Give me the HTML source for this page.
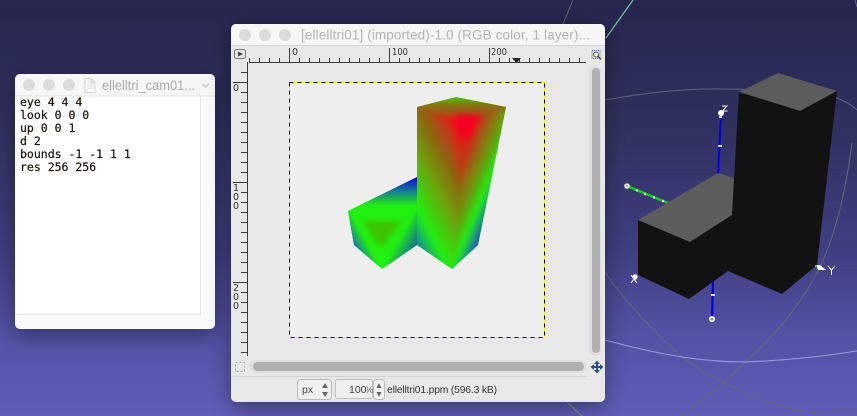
<!DOCTYPE html>
<html><head><meta charset="utf-8">
<style>
html,body{margin:0;padding:0;width:857px;height:416px;overflow:hidden;background:#2a2a55}
svg{position:absolute;left:0;top:0;display:block}
.t{font-family:"Liberation Sans",sans-serif}
.m{font-family:"DejaVu Sans Mono","Liberation Mono",monospace;font-size:11.5px;fill:#1a1208;stroke:#1a1208;stroke-width:.2}
.r{font-family:"DejaVu Sans","Liberation Sans",sans-serif;font-size:9.5px;fill:#333}
</style></head><body>
<svg width="857" height="416" viewBox="0 0 857 416" xmlns="http://www.w3.org/2000/svg">
<defs>
<linearGradient id="bg" x1="0" y1="0" x2="0" y2="1">
<stop offset="0" stop-color="#25254d"/><stop offset=".3" stop-color="#30305f"/><stop offset=".6" stop-color="#3f3e80"/><stop offset=".8" stop-color="#5251a4"/><stop offset="1" stop-color="#605db8"/>
</linearGradient>
<filter id="sh" x="-20%" y="-20%" width="140%" height="140%"><feDropShadow dx="0" dy="6" stdDeviation="11" flood-color="#000" flood-opacity=".38"/></filter>
<filter id="b1" x="-20%" y="-20%" width="140%" height="140%"><feGaussianBlur stdDeviation="2.5"/></filter>
<filter id="b2" x="-30%" y="-30%" width="160%" height="160%"><feGaussianBlur stdDeviation="1"/></filter>
<filter id="b3" x="-60%" y="-60%" width="220%" height="220%"><feGaussianBlur stdDeviation="3.5"/></filter>
<filter id="b4" x="-60%" y="-60%" width="220%" height="220%"><feGaussianBlur stdDeviation="2.6"/></filter>
<clipPath id="tall"><polygon points="417,107 456,97 506,107 478,245 452,269 417,245"/></clipPath>
<clipPath id="small"><polygon points="348,211 417,177 417,245 382,269 354,245"/></clipPath>
<linearGradient id="gl" gradientUnits="userSpaceOnUse" x1="417" y1="245" x2="496" y2="203">
<stop offset="0" stop-color="#148c90"/><stop offset=".2" stop-color="#22f010"/><stop offset=".5" stop-color="#6fa010"/><stop offset=".72" stop-color="#8a6810"/><stop offset=".85" stop-color="#b04814"/><stop offset="1" stop-color="#e81818"/>
</linearGradient>
<linearGradient id="gr" gradientUnits="userSpaceOnUse" x1="478" y1="245" x2="427.400" y2="223.500">
<stop offset="0" stop-color="#1a50c0"/><stop offset=".27" stop-color="#22f010"/><stop offset=".42" stop-color="#50b010"/><stop offset=".55" stop-color="#7a8a10"/><stop offset=".8" stop-color="#b04814"/><stop offset="1" stop-color="#e81818"/>
</linearGradient>
<linearGradient id="gt" gradientUnits="userSpaceOnUse" x1="0" y1="95" x2="0" y2="116">
<stop offset="0" stop-color="#30e010"/><stop offset=".4" stop-color="#7f7a10"/><stop offset="1" stop-color="#a84818"/>
</linearGradient>
<linearGradient id="gs" gradientUnits="userSpaceOnUse" x1="0" y1="177" x2="0" y2="206">
<stop offset="0" stop-color="#1000e8"/><stop offset=".5" stop-color="#148090"/><stop offset="1" stop-color="#22f010"/>
</linearGradient>
<linearGradient id="gsl" gradientUnits="userSpaceOnUse" x1="356" y1="252" x2="369" y2="245">
<stop offset="0" stop-color="#1858b0"/><stop offset=".4" stop-color="#18a070"/><stop offset="1" stop-color="#22f010"/>
</linearGradient>
<linearGradient id="gsr" gradientUnits="userSpaceOnUse" x1="411" y1="254" x2="395" y2="245">
<stop offset="0" stop-color="#147090"/><stop offset="1" stop-color="#22f010"/>
</linearGradient>
</defs>

<rect width="857" height="416" fill="url(#bg)"/>

<!-- background arcs -->
<g fill="none" stroke-width="1">
<path d="M605,100 Q660,90 705,89 Q770,88 837,98 Q848,102 857,110" stroke="#62627c"/>
<path d="M605,273 Q640,320 682,357 Q722,388 787,408 Q825,416 857,412" stroke="#66667a"/>
<path d="M857,7 L855,0" stroke="#66667a"/>
<path d="M852,143 Q846,190 835,227 Q815,300 745,362 Q715,392 680,416" stroke="#66667a"/>
<path d="M605,340 Q645,351 682,357 Q715,362 745,362 Q800,360 857,351" stroke="#9c9ce0"/>
<path d="M606,38 L633,0" stroke="#7fbfa8" stroke-width="1.2"/>
<path d="M573,0 L563,24" stroke="#5f5f72"/>
<path d="M567,402 L582,416" stroke="#7d9a9a"/>
</g>

<!-- 3D axes behind -->
<line x1="721" y1="115" x2="718" y2="175" stroke="#0000f0" stroke-width="2"/>
<circle cx="721" cy="113" r="3" fill="#fff"/><rect x="719" y="116" width="3" height="2" fill="#ccd"/>
<rect x="718" y="145" width="4" height="2" fill="#dde"/>
<line x1="713" y1="280" x2="712" y2="318" stroke="#0000f0" stroke-width="2.2"/>
<rect x="711" y="294" width="4" height="2" fill="#dde"/>
<circle cx="712" cy="319" r="3" fill="#fff"/><rect x="710.500" y="318.500" width="3" height="1.200" fill="#556"/>
<line x1="627" y1="186" x2="668" y2="203" stroke="#10d010" stroke-width="2.500"/>
<circle cx="627" cy="186" r="2.800" fill="#e8e8e8"/><circle cx="627" cy="186" r="1" fill="#7a9"/>
<g fill="#eef"><circle cx="637" cy="190.500" r="1.200"/><circle cx="645" cy="194" r="1.200"/><circle cx="654" cy="197.500" r="1.200"/><circle cx="663" cy="201" r="1.200"/></g>

<!-- 3D block -->
<polygon points="739,92 778,73 837,91 800,111" fill="#5c5c5c"/>
<polygon points="718,173 734,178 732,215 690,242 638,220" fill="#5c5c5c"/>
<polygon points="739,92 800,111 837,91 817,265 782,294 728,271 689,299 638,275 638,220 690,242 732,215" fill="#121212"/>

<path d="M722,106 H727 L722.500,111 H727.500" fill="none" stroke="#fff" stroke-width="1"/>
<circle cx="635" cy="277" r="2.600" fill="#fff"/><path d="M631,275 L637,283 M637,275 L631,283" stroke="#fff" stroke-width="1"/>
<path d="M816,265 L820,265 L826,270 L818,270 Z" fill="#fff"/><rect x="815" y="265" width="2" height="2" fill="#5d5"/>
<path d="M828,266 L831.500,270 L835,266 M831.500,270 V275" fill="none" stroke="#fff" stroke-width="1"/>

<!-- Left text window -->
<g filter="url(#sh)"><rect x="15" y="74" width="200" height="255" rx="5" fill="#fafafa"/></g>
<path d="M15,96 H215 V79 a5,5 0 0 0 -5,-5 H20 a5,5 0 0 0 -5,5 Z" fill="#f6f6f6"/>
<rect x="15" y="96" width="185" height="218" fill="#fff"/>
<rect x="200" y="96" width="1" height="219" fill="#e6e6e6"/>
<rect x="15" y="314" width="186" height="1" fill="#e6e6e6"/>
<rect x="15" y="95.500" width="200" height="1" fill="#e4e4e4"/>
<circle cx="29" cy="85" r="6" fill="#dcdcdc"/><circle cx="49" cy="85" r="6" fill="#dcdcdc"/><circle cx="69" cy="85" r="6" fill="#dcdcdc"/>
<path d="M85,78.500 H91 L95,82.500 V92.500 H85 Z M91,78.500 V82.500 H95" fill="#fff" stroke="#c8c8c8" stroke-width=".8"/>
<path d="M87,84.500 H93 M87,86.500 H93 M87,88.500 H93" stroke="#d8d8d8" stroke-width=".7"/>
<text class="t" x="102" y="90" font-size="13.500" fill="#ababab" textLength="93" lengthAdjust="spacingAndGlyphs">ellelltri_cam01...</text>
<path d="M202,84 L205.500,87 L209,84" fill="none" stroke="#bdbdbd" stroke-width="1.100"/>
<text class="m" x="20" y="106">eye 4 4 4</text>
<text class="m" x="20" y="119">look 0 0 0</text>
<text class="m" x="20" y="132">up 0 0 1</text>
<text class="m" x="20" y="145">d 2</text>
<text class="m" x="20" y="158">bounds -1 -1 1 1</text>
<text class="m" x="20" y="171">res 256 256</text>

<!-- GIMP window -->
<g filter="url(#sh)"><rect x="231" y="24" width="374" height="378" rx="5" fill="#e8e8e8"/></g>
<path d="M231,45 H605 V29 a5,5 0 0 0 -5,-5 H236 a5,5 0 0 0 -5,5 Z" fill="#f6f6f6"/>
<rect x="231" y="45" width="374" height="1" fill="#d6d6d6"/>
<circle cx="245" cy="35" r="6" fill="#dcdcdc"/><circle cx="265" cy="35" r="6" fill="#dcdcdc"/><circle cx="285" cy="35" r="6" fill="#dcdcdc"/>
<text class="t" x="301" y="39.500" font-size="13.500" fill="#b4b4b4" textLength="289" lengthAdjust="spacing">[ellelltri01] (imported)-1.0 (RGB color, 1 layer)...</text>

<!-- rulers -->
<rect x="234.500" y="49.500" width="11" height="9" rx="2" fill="#e4e4e4" stroke="#777"/>
<path d="M238,51.500 L243,54 L238,56.500 Z" fill="#444"/>
<path d="M249,62.500 H586 M247.500,62 V356" stroke="#3c3c3c" stroke-width="1" fill="none"/>
<path stroke="#3c3c3c" stroke-width="1" fill="none" d="M249.500,58V62M259.500,58V62M269.500,58V62M279.500,58V62M289.500,48V62M299.500,58V62M309.500,58V62M319.500,58V62M329.500,58V62M339.500,58V62M349.500,58V62M359.500,58V62M369.500,58V62M379.500,58V62M389.500,48V62M399.500,58V62M409.500,58V62M419.500,58V62M429.500,58V62M439.500,58V62M449.500,58V62M459.500,58V62M469.500,58V62M479.500,58V62M489.500,48V62M499.500,58V62M509.500,58V62M519.500,58V62M529.500,58V62M539.500,58V62M549.500,58V62M559.500,58V62M569.500,58V62M579.500,58V62"/>
<path stroke="#3c3c3c" stroke-width="1" fill="none" d="M241,72.500H247M233,82.500H247M241,92.500H247M241,102.500H247M241,112.500H247M241,122.500H247M241,132.500H247M241,142.500H247M241,152.500H247M241,162.500H247M241,172.500H247M233,182.500H247M241,192.500H247M241,202.500H247M241,212.500H247M241,222.500H247M241,232.500H247M241,242.500H247M241,252.500H247M241,262.500H247M241,272.500H247M233,282.500H247M241,292.500H247M241,302.500H247M241,312.500H247M241,322.500H247M241,332.500H247M241,342.500H247M241,352.500H247"/>
<text class="r" x="292" y="55">0</text>
<text class="r" x="392" y="55" textLength="16" lengthAdjust="spacingAndGlyphs">100</text>
<text class="r" x="491" y="55" textLength="16" lengthAdjust="spacingAndGlyphs">200</text>
<text class="r" x="233" y="91">0</text>
<text class="r" x="233" y="191">1</text><text class="r" x="233" y="200">0</text><text class="r" x="233" y="209">0</text>
<text class="r" x="233" y="291">2</text><text class="r" x="233" y="300">0</text><text class="r" x="233" y="309">0</text>
<path d="M512,58 H521 L516.500,63 Z" fill="#222"/>
<rect x="592" y="50.500" width="8" height="8" fill="none" stroke="#3a5a98" stroke-width="1" stroke-dasharray="1 1"/>
<circle cx="596" cy="54.500" r="2.500" fill="#eee" stroke="#555"/><path d="M598,56.500 L601,59.500" stroke="#555" stroke-width="1.500"/>

<!-- canvas -->
<rect x="248" y="63" width="339" height="294" fill="#e8e8e8"/>
<rect x="290" y="83" width="255" height="255" fill="#eeeeee"/>
<rect x="289.500" y="82.500" width="255" height="255" fill="none" stroke="#ffff00" stroke-width="1"/>
<rect x="289.500" y="82.500" width="255" height="255" fill="none" stroke="#111" stroke-width="1" stroke-dasharray="4 4"/>

<!-- raytraced shape: short arm -->
<g clip-path="url(#small)">
<rect x="340" y="170" width="85" height="105" fill="#22f010"/>
<rect x="340" y="170" width="85" height="37" fill="url(#gs)"/>
<g filter="url(#b2)">
<polygon points="335,205 349,212 384,276 335,276" fill="url(#gsl)"/>
<polygon points="425,195 425,276 377,276" fill="url(#gsr)"/>
</g>
<polygon points="362,221 402,221 381,248" fill="#3cc400" filter="url(#b4)"/>
</g>
<!-- raytraced shape: tall arm -->
<g clip-path="url(#tall)">
<rect x="410" y="90" width="105" height="185" fill="#22f010"/>
<g filter="url(#b1)">
<polygon points="395,85 466,85 466,155 452,285 395,285" fill="url(#gl)"/>
<polygon points="466,85 530,85 530,285 452,285 466,155" fill="url(#gr)"/>
<polygon points="405,107 456,90 518,107 480,116 466,118 450,116" fill="url(#gt)"/>
</g>
<polygon points="453,115 481,115 466,146" fill="#f60020" filter="url(#b3)"/>
<polygon points="458,140 474,140 458,182" fill="#c83010" opacity=".55" filter="url(#b3)"/>
</g>

<!-- scrollbars -->
<rect x="589" y="66" width="12" height="290" rx="6" fill="#dfdfdf"/>
<rect x="592" y="68" width="8" height="285" rx="4" fill="#b0b0b0"/>
<rect x="250" y="360" width="336" height="13" rx="6.500" fill="#dfdfdf"/>
<rect x="253" y="362" width="331" height="9" rx="4.500" fill="#b0b0b0"/>
<rect x="235.500" y="362.500" width="9" height="9" fill="none" stroke="#aaa" stroke-dasharray="2 2"/>
<path fill="#2a5090" d="M597,360.500 L600,364 H598 V366 H600 V364 L603.500,367 L600,370 V368 H598 V370 H600 L597,373.500 L594,370 H596 V368 H594 V370 L590.500,367 L594,364 V366 H596 V364 H594 Z"/>
<rect x="231" y="376" width="356" height="1" fill="#d4d4d4"/>

<!-- bottom controls -->
<rect x="297.500" y="379.500" width="34" height="20" rx="3" fill="#f0f0f0" stroke="#bbb"/>
<text class="t" x="302" y="393" font-size="10.500" fill="#444">px</text>
<path d="M322,388 L325,383 L328,388 Z M322,392 L325,397 L328,392 Z" fill="#666"/>
<rect x="335.500" y="379.500" width="37" height="19" rx="2" fill="#efefef" stroke="#c0c0c0"/>
<text class="t" x="349" y="393" font-size="10.500" fill="#444">100</text>
<text class="t" x="365" y="393" font-size="9.500" fill="#666">%</text>
<rect x="373.500" y="379.500" width="11" height="20" rx="3" fill="#f2f2f2" stroke="#bbb"/>
<path d="M376.500,388 L379,383 L381.500,388 Z M376.500,392 L379,397 L381.500,392 Z" fill="#666"/>
<text class="t" x="387" y="393" font-size="10.300" fill="#333" textLength="110" lengthAdjust="spacing">ellelltri01.ppm (596.3 kB)</text>
</svg>
</body></html>
